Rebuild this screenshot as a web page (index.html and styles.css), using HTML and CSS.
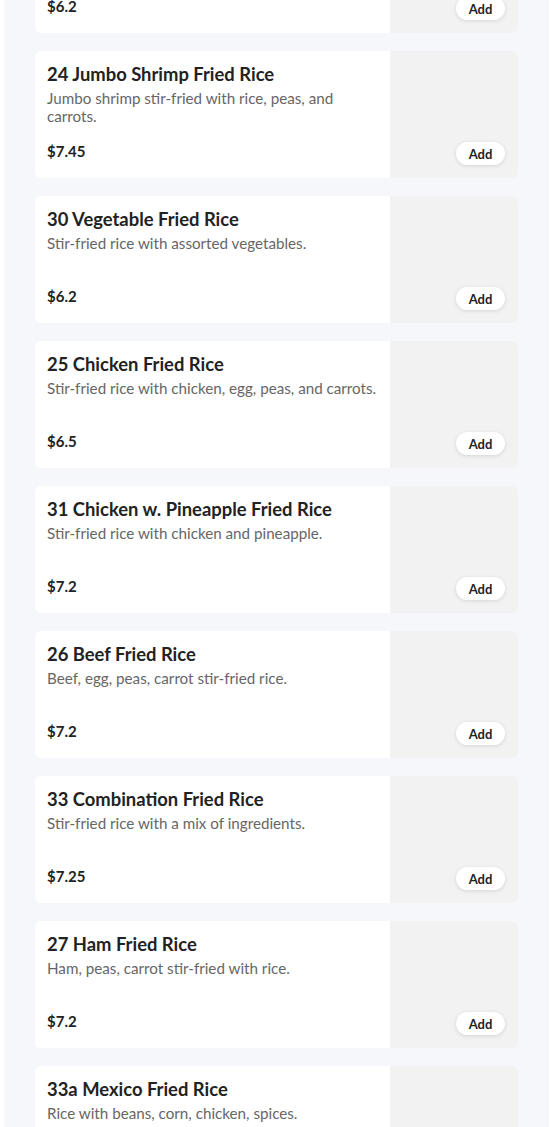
FILE: index.html
```html
<!DOCTYPE html>
<html lang="en">
<head>
  <meta charset="UTF-8" />
  <meta name="viewport" content="width=device-width, initial-scale=1.0"/>
  <title>Fried Rice | Menu</title>
  <link rel="stylesheet" href="styles.css">
</head>
<body>

  <main class="page">
    <div class="menu-list">

      <div class="item">
        <div class="info">
          <h2>23 Pork Fried Rice</h2>
          <p>Stir-fried rice with pork, egg, peas, and carrots.</p>
          <span class="price">$6.2</span>
        </div>
        <div class="thumb"><button class="add">Add</button></div>
      </div>

      <div class="item">
        <div class="info">
          <h2>24 Jumbo Shrimp Fried Rice</h2>
          <p>Jumbo shrimp stir-fried with rice, peas, and carrots.</p>
          <span class="price">$7.45</span>
        </div>
        <div class="thumb"><button class="add">Add</button></div>
      </div>

      <div class="item">
        <div class="info">
          <h2>30 Vegetable Fried Rice</h2>
          <p>Stir-fried rice with assorted vegetables.</p>
          <span class="price">$6.2</span>
        </div>
        <div class="thumb"><button class="add">Add</button></div>
      </div>

      <div class="item">
        <div class="info">
          <h2>25 Chicken Fried Rice</h2>
          <p>Stir-fried rice with chicken, egg, peas, and carrots.</p>
          <span class="price">$6.5</span>
        </div>
        <div class="thumb"><button class="add">Add</button></div>
      </div>

      <div class="item">
        <div class="info">
          <h2>31 Chicken w. Pineapple Fried Rice</h2>
          <p>Stir-fried rice with chicken and pineapple.</p>
          <span class="price">$7.2</span>
        </div>
        <div class="thumb"><button class="add">Add</button></div>
      </div>

      <div class="item">
        <div class="info">
          <h2>26 Beef Fried Rice</h2>
          <p>Beef, egg, peas, carrot stir-fried rice.</p>
          <span class="price">$7.2</span>
        </div>
        <div class="thumb"><button class="add">Add</button></div>
      </div>

      <div class="item">
        <div class="info">
          <h2>33 Combination Fried Rice</h2>
          <p>Stir-fried rice with a mix of ingredients.</p>
          <span class="price">$7.25</span>
        </div>
        <div class="thumb"><button class="add">Add</button></div>
      </div>

      <div class="item">
        <div class="info">
          <h2>27 Ham Fried Rice</h2>
          <p>Ham, peas, carrot stir-fried with rice.</p>
          <span class="price">$7.2</span>
        </div>
        <div class="thumb"><button class="add">Add</button></div>
      </div>

      <div class="item">
        <div class="info">
          <h2>33a Mexico Fried Rice</h2>
          <p>Rice with beans, corn, chicken, spices.</p>
          <span class="price">$7.2</span>
        </div>
        <div class="thumb"><button class="add">Add</button></div>
      </div>

    </div>
  </main>

</body>
</html>
```

FILE: styles.css
```css
* {
  margin: 0;
  padding: 0;
  box-sizing: border-box;
}

body {
  font-family: 'Lato', 'Noto Sans', sans-serif;
  background-color: #fff;
  color: #222;
  overflow: hidden;
}

.page {
  width: 545px;
  margin-left: 4px;
  padding: 0 31px 40px;
  background-color: #f6f7fb;
  min-height: 1127px;
}

/* list is scrolled: first item sits partly above the top */
.menu-list {
  display: flex;
  flex-direction: column;
  gap: 18px;
  margin-top: -94px;
}

.item {
  display: flex;
  height: 127px;
  background-color: #fff;
  border-radius: 6px;
  overflow: hidden;
}

.info {
  flex: 1;
  display: flex;
  flex-direction: column;
  padding: 12px 9px 17px 12px;
}

.info h2 {
  font-size: 18.4px;
  line-height: 22px;
  font-weight: 700;
  color: #222;
}

.info p {
  margin-top: 4px;
  font-size: 15.2px;
  line-height: 18px;
  color: #666;
}

.price {
  margin-top: auto;
  font-size: 15px;
  line-height: 20px;
  font-weight: 700;
  color: #222;
}

.thumb {
  width: 128px;
  background-color: #f2f2f2;
  position: relative;
}

.add {
  position: absolute;
  right: 13px;
  bottom: 13px;
  width: 49px;
  height: 23px;
  border: none;
  border-radius: 12px;
  background: #fff;
  box-shadow: 0 1px 4px rgba(0, 0, 0, 0.12);
  font-family: 'Lato', 'Noto Sans', sans-serif;
  font-size: 13px;
  font-weight: 700;
  color: #222;
  cursor: pointer;
}
```
